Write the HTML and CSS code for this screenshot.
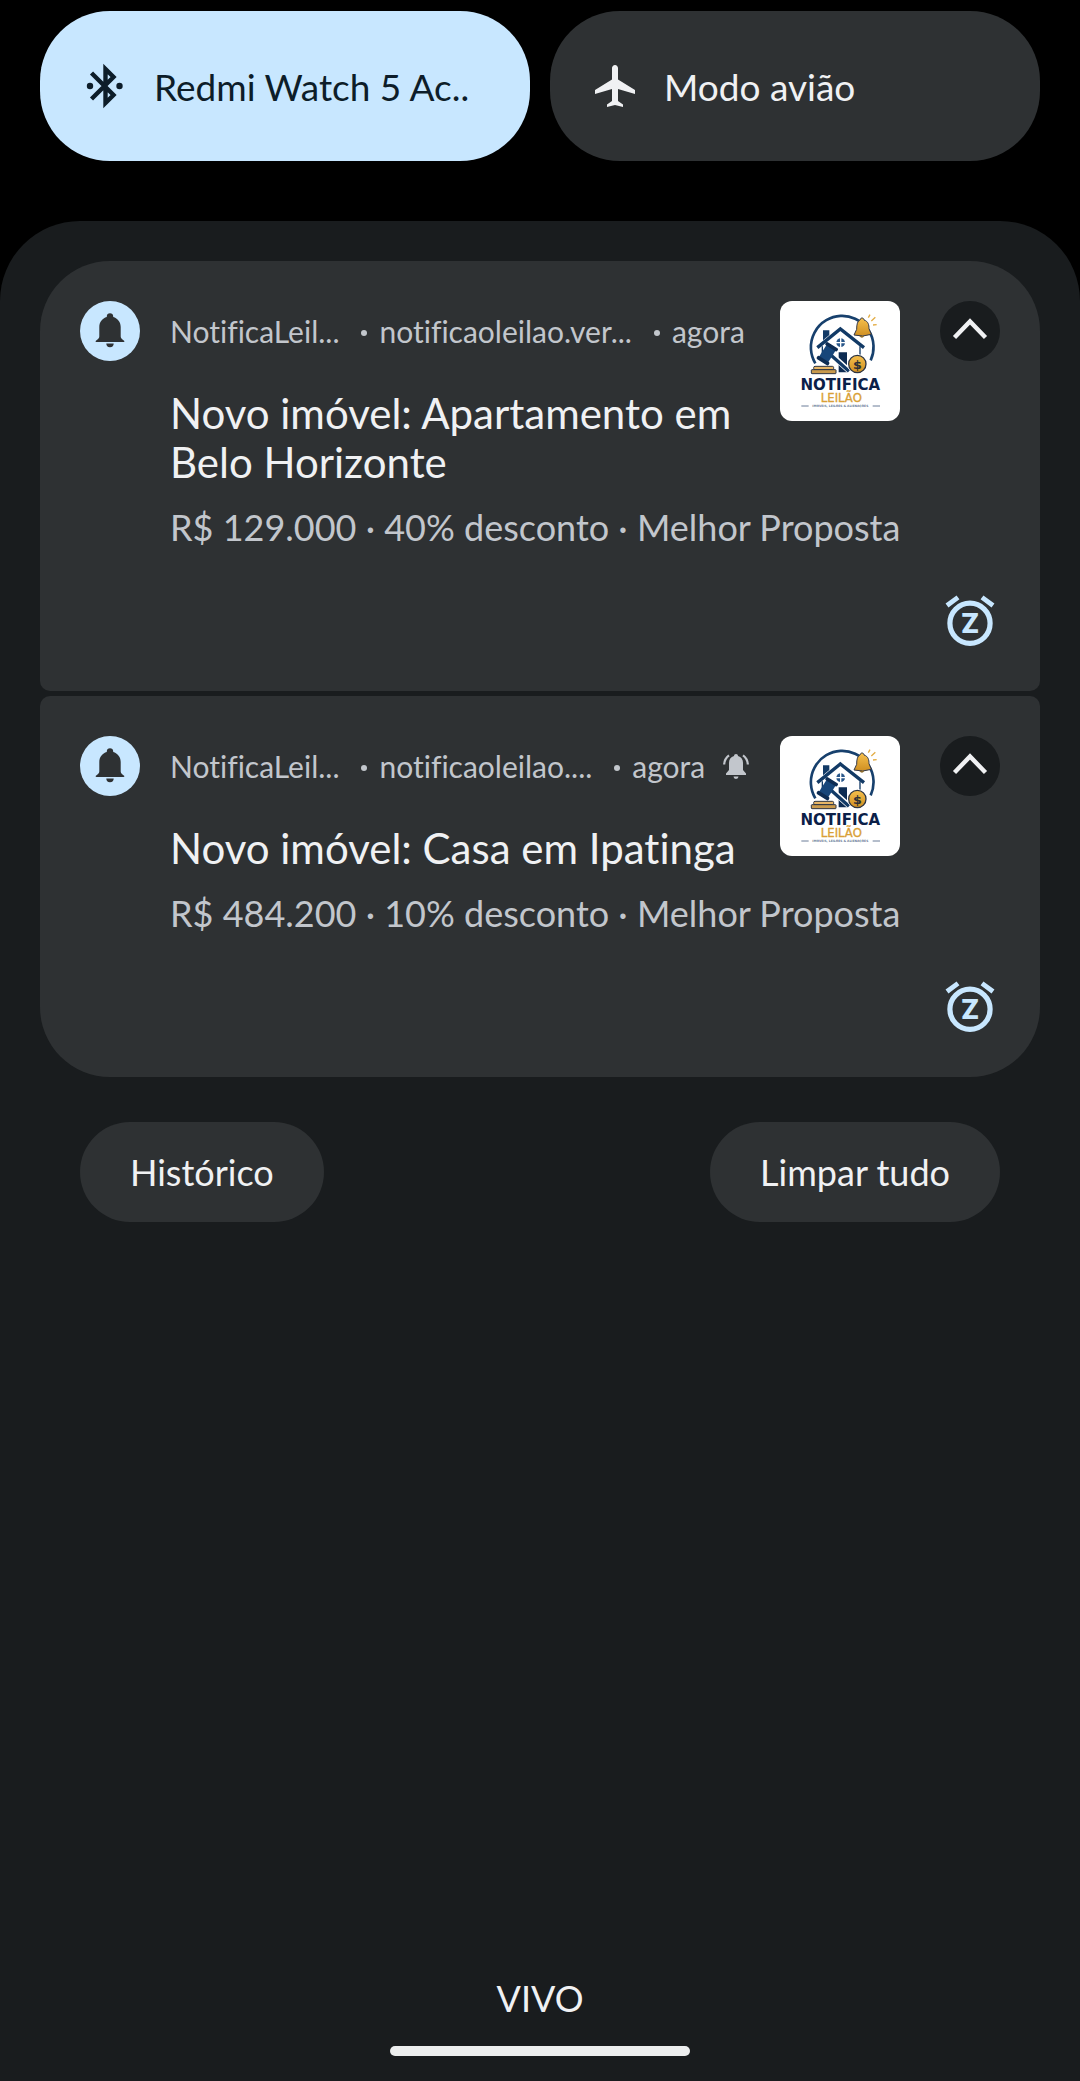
FILE: index.html
```html
<!DOCTYPE html>
<html lang="pt-BR">
<head>
  <meta charset="UTF-8"/>
  <meta name="viewport" content="width=device-width, initial-scale=1.0"/>
  <title>Notificações</title>
  <link rel="stylesheet" href="styles.css">
</head>
<body>
  <!-- Shared icons -->
  <svg class="sprite" aria-hidden="true">
    <symbol id="icon-bell" viewBox="0 0 60 60">
      <path d="M30 12.3c-1.9 0-3.2 1.3-3.2 3v.6C22.3 17.2 19.3 21 19.3 26v9.5c0 2-1.6 2.7-3.4 4.2-.6.7-.2 1.4.6 1.4h27c.8 0 1.2-.7.6-1.4-1.8-1.5-3.4-2.2-3.4-4.2V26c0-5-3-8.8-7.5-10.1v-.6c0-1.7-1.3-3-3.2-3z"/>
      <path d="M26.3 42.6h7.4a3.7 3.7 0 0 1-7.4 0z"/>
    </symbol>
    <symbol id="icon-up" viewBox="0 0 60 60">
      <path d="M14.5 36.5 30 20.5l15.5 16" fill="none" stroke="currentColor" stroke-width="4.4"/>
    </symbol>
    <symbol id="icon-snooze" viewBox="0 0 60 60">
      <circle cx="30" cy="32.3" r="20.1" fill="none" stroke="currentColor" stroke-width="5.2"/>
      <path d="M7 14.5 18 6.3M53 14.5 42 6.3" fill="none" stroke="currentColor" stroke-width="4.8"/>
      <text x="30" y="42.3" class="snooze-z">Z</text>
    </symbol>
    <symbol id="logo" viewBox="0 0 360 360">
      <linearGradient id="gold" x1="0" y1="0" x2="0" y2="1">
        <stop offset="0" stop-color="#f6c04c"/>
        <stop offset="1" stop-color="#cf8f22"/>
      </linearGradient>
      <!-- ring -->
      <path d="M106 187A94 94 0 1 1 272 178" fill="none" stroke="#17406d" stroke-width="8"/>
      <!-- house -->
      <path d="M129 118V88h19v14z" fill="#123a66"/>
      <path d="M112 140 181 84l71 56" fill="none" stroke="#123a66" stroke-width="10"/>
      <path d="M127 136v26M240 136v28" stroke="#123a66" stroke-width="4"/>
      <circle cx="182" cy="125" r="13" fill="#29578a"/>
      <path d="M182 111v28M168 125h28" stroke="#fff" stroke-width="4"/>
      <path d="M176 154h25v60h-25z" fill="#0d2c53"/>
      <!-- gavel -->
      <path d="m150 158 58 52" stroke="#fff" stroke-width="17"/>
      <path d="m150 160 57 51" stroke="#123a66" stroke-width="10"/>
      <g transform="rotate(32 142 158)">
        <path d="M126 134h32v48h-32z" fill="#17467a"/>
        <rect x="121" y="128" width="42" height="11" rx="4" fill="#0d2c53"/>
        <rect x="121" y="177" width="42" height="11" rx="4" fill="#0d2c53"/>
      </g>
      <rect x="101" y="196" width="60" height="10" rx="4" fill="#e6b566" stroke="#2c3443" stroke-width="3"/>
      <rect x="94" y="206" width="74" height="12" rx="2" fill="#c99a4d" stroke="#2c3443" stroke-width="3"/>
      <!-- coin -->
      <circle cx="232" cy="189" r="30" fill="#fff"/>
      <circle cx="232" cy="189" r="26" fill="url(#gold)" stroke="#2c3443" stroke-width="4"/>
      <text x="232" y="203" class="logo-coin">$</text>
      <!-- bell -->
      <path d="M246 51c4 0 6 3 6 6 13 4 15 15 15 26l7 17q-26 9-52 2l8-17c0-15 2-25 11-29 0-3 2-5 5-5z" fill="url(#gold)" stroke="#33394a" stroke-width="3"/>
      <path d="M238 105h15q-7 10-15 0z" fill="#8a6a2b"/>
      <path d="m265 50 5-9M274 60l12-11M279 72l11-1" stroke="#e3ad45" stroke-width="4"/>
      <!-- wordmark -->
      <text x="181" y="267" class="logo-name">NOTIFICA</text>
      <text x="184" y="303" class="logo-sub">LEILÃO</text>
      <path d="M64 315h22M278 315h22" stroke="#6b7c98" stroke-width="3"/>
      <text x="181" y="319" class="logo-tag">IMÓVEIS, LEILÕES &amp; ALIENAÇÕES</text>
    </symbol>
  </svg>

  <!-- Quick settings -->
  <section class="tiles" aria-label="Configurações rápidas">
    <button type="button" class="tile tile-on" aria-pressed="true">
      <svg class="tile-icon" viewBox="0 0 50 50" aria-hidden="true">
        <path d="M11.500 12 33.500 34l-8 8V8l8 8-22 22" fill="none" stroke="currentColor" stroke-width="4.400"/>
        <circle cx="10" cy="25" r="3.200"/>
        <circle cx="39.500" cy="25" r="3.200"/>
      </svg>
      <span>Redmi Watch 5 Ac..</span>
    </button>
    <button type="button" class="tile" aria-pressed="false">
      <svg class="tile-icon" viewBox="0 0 50 50" aria-hidden="true">
        <path d="M25 4c1.700 0 3 1.400 3 3.100V18.500L45 29v4L28 28v12l5 3.500V46l-8-2-8 2v-2.500l5-3.500V28L5 33v-4l17-10.500V7.100C22 5.400 23.300 4 25 4z"/>
      </svg>
      <span>Modo avião</span>
    </button>
  </section>

  <main class="panel">
    <div class="cards">
      <article class="card">
        <div class="app-icon"><svg aria-hidden="true"><use href="#icon-bell"/></svg></div>
        <div class="meta">
          <span>NotificaLeil...</span>
          <i class="dot"></i>
          <span>notificaoleilao.ver...</span>
          <i class="dot"></i>
          <span>agora</span>
        </div>
        <svg class="logo" role="img" aria-label="Notifica Leilão"><use href="#logo"/></svg>
        <button type="button" class="collapse" aria-label="Recolher"><svg aria-hidden="true"><use href="#icon-up"/></svg></button>
        <h2 class="title">Novo imóvel: Apartamento em Belo Horizonte</h2>
        <p class="details">R$ 129.000 · 40% desconto · Melhor Proposta</p>
        <button type="button" class="snooze" aria-label="Adiar"><svg aria-hidden="true"><use href="#icon-snooze"/></svg></button>
      </article>

      <article class="card">
        <div class="app-icon"><svg aria-hidden="true"><use href="#icon-bell"/></svg></div>
        <div class="meta">
          <span>NotificaLeil...</span>
          <i class="dot"></i>
          <span>notificaoleilao....</span>
          <i class="dot"></i>
          <span>agora</span>
          <svg class="ringing" viewBox="0 0 26 26" aria-hidden="true">
            <path d="M13 1c1.200 0 2 .8 2 2 3.300.9 5 3.500 5 6.700V17l3 3.500V22H3v-1.500L6 17V9.700C6 6.500 7.700 3.900 11 3c0-1.200.8-2 2-2zM10.500 23.500h5a2.500 2.500 0 0 1-5 0z"/>
            <path d="M1.200 11.500C1.300 7.500 3 4.500 6 2.300M24.800 11.500c-.1-4-1.800-7-4.800-9.200" fill="none" stroke="currentColor" stroke-width="2.200"/>
          </svg>
        </div>
        <svg class="logo" role="img" aria-label="Notifica Leilão"><use href="#logo"/></svg>
        <button type="button" class="collapse" aria-label="Recolher"><svg aria-hidden="true"><use href="#icon-up"/></svg></button>
        <h2 class="title">Novo imóvel: Casa em Ipatinga</h2>
        <p class="details">R$ 484.200 · 10% desconto · Melhor Proposta</p>
        <button type="button" class="snooze" aria-label="Adiar"><svg aria-hidden="true"><use href="#icon-snooze"/></svg></button>
      </article>
    </div>

    <div class="actions">
      <button type="button">Histórico</button>
      <button type="button">Limpar tudo</button>
    </div>

    <footer class="footer">
      <div class="carrier">VIVO</div>
      <div class="home-bar"></div>
    </footer>
  </main>
</body>
</html>
```
FILE: styles.css
```css
:root {
  --black:  #000;
  --panel:  #191c1e;
  --card:   #2e3133;
  --accent: #c8e7ff;
  --text:   #f0f1f3;
  --muted:  #c2c6cc;
}
* { box-sizing: border-box; margin: 0; padding: 0; }
body {
  display: flex;
  flex-direction: column;
  min-height: 100vh;
  padding-top: 11px;
  background: var(--black);
  color: var(--text);
  font-family: Lato, "Open Sans", sans-serif;
  font-size: 36px;
  font-variant-ligatures: none;
}
button {
  border: none;
  background: var(--card);
  color: var(--text);
  font: inherit;
  cursor: pointer;
}
svg { display: block; fill: currentColor; }
.sprite { position: absolute; width: 0; height: 0; }

/* Quick settings */
.tiles {
  display: grid;
  grid-template-columns: 1fr 1fr;
  gap: 20px;
  padding: 0 40px;
}
.tile {
  display: flex;
  align-items: center;
  gap: 24px;
  height: 150px;
  padding: 0 40px;
  border-radius: 70px;
  font-size: 37px;
  white-space: nowrap;
}
.tile-on { background: var(--accent); color: #0d1d29; }
.tile-icon { width: 50px; height: 50px; flex: none; }

/* Notification panel */
.panel {
  flex: 1;
  display: flex;
  flex-direction: column;
  margin-top: 60px;
  padding: 40px 40px 25px;
  background: var(--panel);
  border-radius: 80px 80px 0 0;
}
.cards {
  display: flex;
  flex-direction: column;
  gap: 5px;
}
.card {
  display: grid;
  grid-template-columns: 90px 1fr 120px 100px;
  padding: 40px;
  background: var(--card);
  border-radius: 10px;
}
.card:first-child { border-radius: 70px 70px 10px 10px; }
.card:last-child { border-radius: 10px 10px 70px 70px; }
.app-icon {
  width: 60px;
  height: 60px;
  grid-row: 1 / 3;
  border-radius: 50%;
  background: var(--accent);
  color: var(--card);
}
.app-icon svg,
.collapse svg,
.snooze svg { width: 60px; height: 60px; }
.meta {
  display: flex;
  align-items: center;
  height: 40px;
  margin-top: 10px;
  color: var(--muted);
  font-size: 30px;
  white-space: nowrap;
}
.dot {
  width: 6px;
  height: 6px;
  margin: 4px 12px 0 22px;
  border-radius: 50%;
  background: currentColor;
}
.ringing { width: 26px; height: 26px; margin-left: 18px; }
.logo {
  grid-column: 3;
  grid-row: 1 / 3;
  width: 120px;
  height: 120px;
  border-radius: 12px;
  background: #fff;
}
.collapse {
  grid-column: 4;
  grid-row: 1 / 3;
  justify-self: end;
  align-self: start;
  width: 60px;
  height: 60px;
  border-radius: 50%;
  background: var(--panel);
}
.title {
  grid-column: 2;
  grid-row: 2;
  margin-top: 38px;
  padding-right: 20px;
  font-size: 42px;
  font-weight: 400;
  line-height: 49px;
}
.details {
  grid-column: 2 / 5;
  margin-top: 18px;
  color: var(--muted);
  font-size: 36px;
  line-height: 44px;
}
.snooze {
  grid-column: 4;
  justify-self: end;
  width: 60px;
  height: 60px;
  margin-top: 42px;
  background: none;
  color: var(--accent);
}
.snooze-z {
  font: 900 28px Roboto, sans-serif;
  text-anchor: middle;
}

/* Logo lettering */
.logo-coin,
.logo-name,
.logo-sub,
.logo-tag {
  font-family: "DejaVu Sans", sans-serif;
  font-weight: 700;
  text-anchor: middle;
}
.logo-coin { font-size: 38px; fill: #2c2f36; }
.logo-name { font-size: 45px; fill: #0b2048; }
.logo-sub { font-size: 35px; font-weight: 400; fill: #d9a036; stroke: #d9a036; }
.logo-tag { font-size: 9px; fill: #6b7c98; }

.actions {
  display: flex;
  justify-content: space-between;
  padding: 45px 40px 0;
}
.actions button {
  height: 100px;
  padding: 0 50px;
  border-radius: 50px;
}

.footer {
  display: flex;
  flex-direction: column;
  align-items: center;
  gap: 26px;
  margin-top: auto;
}
.carrier { line-height: 44px; }
.home-bar {
  width: 300px;
  height: 10px;
  border-radius: 5px;
  background: #eceeee;
}
```
